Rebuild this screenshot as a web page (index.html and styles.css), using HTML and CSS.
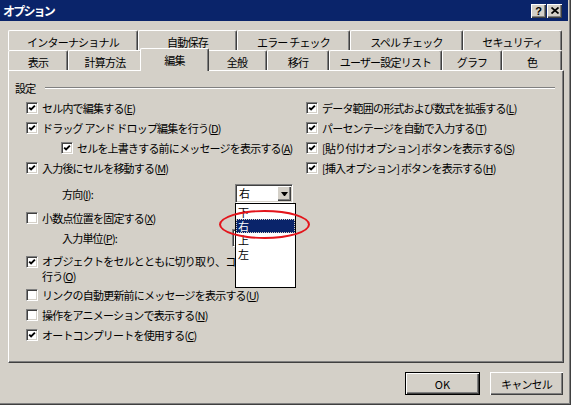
FILE: index.html
```html
<!DOCTYPE html>
<html lang="ja">
<head>
    <meta charset="UTF-8">
    <title>オプション</title>
    <link rel="stylesheet" href="styles.css">
</head>
<body>
    <div class="window">
        <div class="titlebar">
            <span class="title">オプション</span>
            <div class="caption-buttons">
                <span class="cap-btn help">?</span>
                <span class="cap-btn">
                    <svg width="8" height="7" viewBox="0 0 8 7"><path d="M0.5 0.5 L7.5 6.5 M7.5 0.5 L0.5 6.5" stroke="#000" stroke-width="1.7" fill="none"/></svg>
                </span>
            </div>
        </div>

        <div class="tabs">
            <div class="tab-row">
                <div class="tab w130">インターナショナル</div>
                <div class="tab w99">自動保存</div>
                <div class="tab w113">エラー チェック</div>
                <div class="tab w113">スペル チェック</div>
                <div class="tab w99">セキュリティ</div>
            </div>
            <div class="tab-row">
                <div class="tab w60">表示</div>
                <div class="tab w74">計算方法</div>
                <div class="tab w65 active">編集</div>
                <div class="tab w60">全般</div>
                <div class="tab w62">移行</div>
                <div class="tab w113">ユーザー設定リスト</div>
                <div class="tab w60">グラフ</div>
                <div class="tab w60">色</div>
            </div>
        </div>

        <div class="panel">
            <div class="group-title">
                <span>設定</span>
                <span class="rule"></span>
            </div>
            <div class="columns">
                <div class="col col-left">
                    <div class="check checked"><span class="box"><svg width="10" height="10" viewBox="0 0 10 10"><path d="M2.2 4.6 L4.1 6.5 L7.9 2.6" stroke="#000" stroke-width="1.9" fill="none"/></svg></span><span>セル内で編集する(<u>E</u>)</span></div>
                    <div class="check checked"><span class="box"><svg width="10" height="10" viewBox="0 0 10 10"><path d="M2.2 4.6 L4.1 6.5 L7.9 2.6" stroke="#000" stroke-width="1.9" fill="none"/></svg></span><span>ドラッグ アンド ドロップ編集を行う(<u>D</u>)</span></div>
                    <div class="check checked indent"><span class="box"><svg width="10" height="10" viewBox="0 0 10 10"><path d="M2.2 4.6 L4.1 6.5 L7.9 2.6" stroke="#000" stroke-width="1.9" fill="none"/></svg></span><span>セルを上書きする前にメッセージを表示する(<u>A</u>)</span></div>
                    <div class="check checked"><span class="box"><svg width="10" height="10" viewBox="0 0 10 10"><path d="M2.2 4.6 L4.1 6.5 L7.9 2.6" stroke="#000" stroke-width="1.9" fill="none"/></svg></span><span>入力後にセルを移動する(<u>M</u>)</span></div>

                    <div class="field-row direction-row">
                        <span class="field-label">方向(<u>I</u>):</span>
                        <div class="combo">
                            <span class="combo-value">右</span>
                            <span class="combo-arrow"><span class="triangle"></span></span>
                            <div class="combo-list">
                                <div class="combo-item">下</div>
                                <div class="combo-item selected">右</div>
                                <div class="combo-item">上</div>
                                <div class="combo-item">左</div>
                            </div>
                            <div class="annotation"></div>
                        </div>
                    </div>

                    <div class="check decimal-row"><span class="box"></span><span>小数点位置を固定する(<u>X</u>)</span></div>
                    <div class="field-row unit-row">
                        <span class="field-label unit-label">入力単位(<u>P</u>):</span>
                        <span class="edit"></span>
                    </div>
                    <div class="check checked multi"><span class="box"><svg width="10" height="10" viewBox="0 0 10 10"><path d="M2.2 4.6 L4.1 6.5 L7.9 2.6" stroke="#000" stroke-width="1.9" fill="none"/></svg></span><span class="clip">オブジェクトをセルとともに切り取り、コピー、並べ替えを<br>行う(<u>O</u>)</span></div>
                    <div class="check link-row"><span class="box"></span><span>リンクの自動更新前にメッセージを表示する(<u>U</u>)</span></div>
                    <div class="check"><span class="box"></span><span>操作をアニメーションで表示する(<u>N</u>)</span></div>
                    <div class="check checked"><span class="box"><svg width="10" height="10" viewBox="0 0 10 10"><path d="M2.2 4.6 L4.1 6.5 L7.9 2.6" stroke="#000" stroke-width="1.9" fill="none"/></svg></span><span>オートコンプリートを使用する(<u>C</u>)</span></div>
                </div>

                <div class="col col-right">
                    <div class="check checked"><span class="box"><svg width="10" height="10" viewBox="0 0 10 10"><path d="M2.2 4.6 L4.1 6.5 L7.9 2.6" stroke="#000" stroke-width="1.9" fill="none"/></svg></span><span>データ範囲の形式および数式を拡張する(<u>L</u>)</span></div>
                    <div class="check checked"><span class="box"><svg width="10" height="10" viewBox="0 0 10 10"><path d="M2.2 4.6 L4.1 6.5 L7.9 2.6" stroke="#000" stroke-width="1.9" fill="none"/></svg></span><span>パーセンテージを自動で入力する(<u>T</u>)</span></div>
                    <div class="check checked"><span class="box"><svg width="10" height="10" viewBox="0 0 10 10"><path d="M2.2 4.6 L4.1 6.5 L7.9 2.6" stroke="#000" stroke-width="1.9" fill="none"/></svg></span><span>[貼り付けオプション] ボタンを表示する(<u>S</u>)</span></div>
                    <div class="check checked"><span class="box"><svg width="10" height="10" viewBox="0 0 10 10"><path d="M2.2 4.6 L4.1 6.5 L7.9 2.6" stroke="#000" stroke-width="1.9" fill="none"/></svg></span><span>[挿入オプション] ボタンを表示する(<u>H</u>)</span></div>
                </div>
            </div>
        </div>

        <div class="footer">
            <button type="button" class="btn btn-default">OK</button>
            <button type="button" class="btn btn-cancel">キャンセル</button>
        </div>
    </div>
</body>
</html>
```

FILE: styles.css
```css
body {
    margin: 0;
    background: #d4d0c8;
    font-family: "Noto Sans CJK JP", sans-serif;
    font-size: 11px;
    letter-spacing: -0.8px;
    color: #000;
}
.window {
    width: 571px;
    height: 405px;
    box-sizing: border-box;
    background: #d4d0c8;
    border-right: 1px solid #404040;
    border-bottom: 1px solid #404040;
    box-shadow: inset -1px -1px #808080;
}
.titlebar {
    height: 21px;
    margin-right: 2px;
    padding: 0 6px 0 3px;
    background: #0a246a;
    display: flex;
    align-items: center;
    justify-content: space-between;
}
.title {
    color: #fff;
    font-weight: bold;
    font-size: 12px;
    letter-spacing: -1.8px;
}
.caption-buttons {
    display: flex;
    gap: 1px;
}
.cap-btn {
    width: 15px;
    height: 14px;
    box-sizing: border-box;
    background: #d4d0c8;
    box-shadow: inset 1px 1px #fff, inset -1px -1px #404040, inset -2px -2px #808080;
    display: flex;
    align-items: center;
    justify-content: center;
}
.cap-btn.help {
    font-family: "Liberation Sans", sans-serif;
    font-weight: bold;
    font-size: 11px;
    letter-spacing: 0;
}

/* tabs */
.tabs {
    margin: 9px 0 0 8px;
    width: 556px;
}
.tab-row {
    display: flex;
    align-items: flex-start;
    height: 20px;
}
.tab {
    box-sizing: border-box;
    height: 20px;
    padding-top: 2px;
    line-height: 18px;
    text-align: center;
    white-space: nowrap;
    background: #d4d0c8;
    border-top: 1px solid #fff;
    border-left: 1px solid #fff;
    border-right: 1px solid #404040;
    border-radius: 2px 2px 0 0;
    box-shadow: inset -1px 0 #808080;
}
.tab.active {
    height: 23px;
    margin: -2px -2px -1px;
    position: relative;
    z-index: 1;
}
.w60 { width: 60px; }
.w62 { width: 62px; }
.w65 { width: 65px; }
.w65.active { width: 69px; }
.w74 { width: 74px; }
.w99 { width: 99px; }
.w113 { width: 113px; }
.w130 { width: 130px; }

/* page */
.panel {
    width: 556px;
    height: 293px;
    margin-left: 8px;
    box-sizing: border-box;
    border-top: 1px solid #fff;
    border-left: 1px solid #fff;
    border-right: 1px solid #404040;
    border-bottom: 1px solid #404040;
    box-shadow: inset -1px -1px #808080;
}
.group-title {
    display: flex;
    align-items: center;
    gap: 10px;
    height: 16px;
    margin: 9px 8px 0 6px;
}
.rule {
    flex: 1;
    border-top: 1px solid #808080;
    border-bottom: 1px solid #fff;
}
.columns {
    display: flex;
    margin-top: 2px;
    padding-left: 17px;
}
.col-left {
    width: 280px;
}
.col-right {
    flex: 1;
}
.check {
    display: flex;
    align-items: center;
    height: 20px;
    white-space: nowrap;
}
.check.indent {
    margin-left: 35px;
}
.box {
    flex: none;
    width: 12px;
    height: 12px;
    box-sizing: border-box;
    margin-right: 4px;
    background: #fff;
    border: 1px solid;
    border-color: #808080 #fff #fff #808080;
    box-shadow: inset 1px 1px #404040, inset -1px -1px #d4d0c8;
}
.box svg {
    display: block;
}
.check.multi {
    height: auto;
    align-items: flex-start;
    margin-top: 6px;
    line-height: 15px;
}
.check.multi .box {
    margin-top: 2px;
}
.clip {
    width: 250px;
    overflow: hidden;
}
.decimal-row {
    margin-top: 5px;
}
.link-row {
    margin-top: 1px;
}

.field-row {
    display: flex;
    align-items: center;
    padding-left: 36px;
}
.direction-row {
    height: 19px;
    margin-top: 6px;
}
.unit-row {
    height: 20px;
}
.field-label {
    width: 173px;
}
.unit-label {
    width: 170px;
}
.edit {
    width: 40px;
    height: 18px;
    box-sizing: border-box;
    background: #fff;
    border: 1px solid;
    border-color: #808080 #fff #fff #808080;
    box-shadow: inset 1px 1px #404040, inset -1px -1px #d4d0c8;
}

/* combo box with open list */
.combo {
    position: relative;
    width: 58px;
    height: 19px;
    box-sizing: border-box;
    display: flex;
    background: #fff;
    border: 1px solid;
    border-color: #808080 #fff #fff #808080;
    box-shadow: inset 1px 1px #404040, inset -1px -1px #d4d0c8;
}
.combo-value {
    flex: 1;
    padding-left: 3px;
    line-height: 17px;
}
.combo-arrow {
    width: 14px;
    margin: 1px 1px 1px 0;
    background: #d4d0c8;
    box-shadow: inset 1px 1px #fff, inset -1px -1px #404040, inset -2px -2px #808080;
    display: flex;
    align-items: center;
    justify-content: center;
}
.triangle {
    width: 1px;
    height: 0;
    border-top: 4px solid #000;
    border-left: 3px solid transparent;
    border-right: 3px solid transparent;
}
.combo-list {
    position: absolute;
    left: -1px;
    top: 18px;
    width: 61px;
    height: 85px;
    box-sizing: border-box;
    padding-top: 1px;
    background: #fff;
    border: 1px solid #000;
    z-index: 2;
}
.combo-item {
    height: 14px;
    line-height: 14px;
    padding-left: 2px;
}
.combo-item.selected {
    background: #0a246a;
    color: #fff;
    outline: 1px dotted #d4d0c8;
    outline-offset: -1px;
}
.annotation {
    position: absolute;
    left: -17px;
    top: 25px;
    width: 91px;
    height: 29px;
    box-sizing: border-box;
    border: 2px solid #e3141b;
    border-radius: 50%;
    z-index: 3;
}

/* buttons */
.footer {
    display: flex;
    justify-content: flex-end;
    gap: 10px;
    margin-top: 9px;
    padding-right: 7px;
}
.btn {
    height: 23px;
    padding: 0;
    background: #d4d0c8;
    font-family: "Noto Sans CJK JP", sans-serif;
    font-size: 11px;
    letter-spacing: -0.8px;
    color: #000;
    border: none;
    box-shadow: inset 1px 1px #fff, inset -1px -1px #404040, inset -2px -2px #808080;
}
.btn-default {
    width: 75px;
    border: 1px solid #000;
    letter-spacing: 0;
}
.btn-cancel {
    width: 73px;
}
```
